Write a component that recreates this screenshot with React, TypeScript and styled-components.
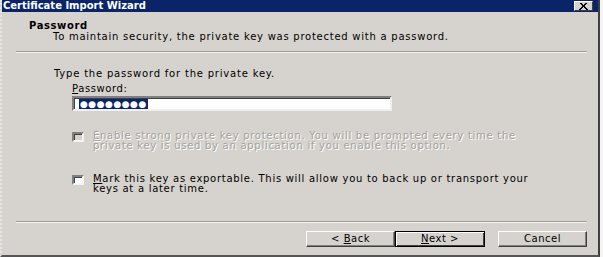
import React from "react";
import styled, { createGlobalStyle } from "styled-components";

const Global = createGlobalStyle`
  html, body { margin: 0; padding: 0; background: #f4f4f4; }
  body { width: 603px; height: 257px; overflow: hidden; }
  * { box-sizing: border-box; }
`;

const Window = styled.div`
  width: 600px;
  height: 257px;
  display: flex;
  flex-direction: column;
  background: #d6d3ce;
  border-left: 2px dotted #e6e6e6;
  border-right: 2px solid #404040;
  border-bottom: 2px solid #555555;
  font-family: "DejaVu Sans", Verdana, sans-serif;
  font-size: 10px;
  color: #000;
`;

const TitleBar = styled.div`
  height: 12px;
  background: #0a246a;
  display: flex;
  align-items: center;
  justify-content: space-between;
  padding: 0 5px 0 1px;
`;

const TitleText = styled.span`
  color: #fff;
  font-weight: bold;
  font-size: 10px;
  line-height: 12px;
`;

const CloseBtn = styled.div`
  width: 19px;
  height: 10px;
  background: #d6d3ce;
  border: 1px solid;
  border-color: #fff #404040 #404040 #fff;
  display: flex;
  align-items: center;
  justify-content: center;
`;

const Header = styled.div`
  height: 39px;
  padding: 9px 0 0 27px;
  display: flex;
  flex-direction: column;
  gap: 1px;
`;

const HeaderTitle = styled.div`
  font-weight: bold;
  line-height: 10px;
  font-size: 10px;
  letter-spacing: 0.6px;
`;

const HeaderSub = styled.div`
  line-height: 10px;
  padding-left: 24px;
  letter-spacing: 0.75px;
`;

const Separator = styled.div`
  margin-left: 14px;
  width: 571px;
  height: 2px;
  border-top: 1px solid #a09d98;
  border-bottom: 1px solid #f4f3f1;
`;

const Content = styled.div`
  flex: 1;
  padding: 16px 0 0 52px;
  display: flex;
  flex-direction: column;
`;

const Line = styled.div<{ $spacing?: number }>`
  line-height: 10px;
  letter-spacing: ${(p) => p.$spacing ?? 0}px;
`;

const Field = styled.div`
  margin: 5px 0 0 18px;
  display: flex;
  flex-direction: column;
`;

const Input = styled.div`
  margin-top: 2px;
  width: 320px;
  height: 15px;
  background: #fff;
  border: 2px solid;
  border-color: #808080 #f0f0f0 #f0f0f0 #808080;
  box-shadow: inset 1px 1px 0 #404040;
  display: flex;
  align-items: center;
  padding-left: 5px;
`;

const Selected = styled.span`
  background: #0a246a;
  color: #fff;
  font-size: 9px;
  line-height: 10px;
  letter-spacing: 0.5px;
  padding: 0 1px;
`;

const CheckRow = styled.div<{ $top: number }>`
  margin: ${(p) => p.$top}px 0 0 18px;
  display: flex;
  gap: 9px;
  align-items: flex-start;
`;

const Box = styled.div<{ $disabled?: boolean }>`
  flex: none;
  width: 12px;
  height: 10px;
  margin-top: 1px;
  background: ${(p) => (p.$disabled ? "#d6d3ce" : "#fff")};
  border: 2px solid;
  border-color: #808080 #f4f4f4 #f4f4f4 #808080;
  box-shadow: inset 1px 1px 0 #404040;
`;

const CheckText = styled.div<{ $disabled?: boolean }>`
  line-height: 9.5px;
  letter-spacing: 0.72px;
  color: ${(p) => (p.$disabled ? "#a5a29d" : "#000")};
  text-shadow: ${(p) => (p.$disabled ? "1px 1px 0 #fff" : "none")};
`;

const Footer = styled.div`
  height: 32px;
  display: flex;
  justify-content: flex-end;
  padding: 8px 11px 0 0;
`;

const Button = styled.div<{ $default?: boolean; $gap?: number }>`
  width: ${(p) => (p.$default ? 90 : 89)}px;
  height: 16px;
  margin-left: ${(p) => p.$gap ?? 0}px;
  display: flex;
  align-items: center;
  justify-content: center;
  line-height: 10px;
  letter-spacing: 0.5px;
  white-space: pre;
  background: #d6d3ce;
  border: 1px solid;
  border-color: ${(p) => (p.$default ? "#000" : "#fff #404040 #404040 #fff")};
  box-shadow: ${(p) =>
    p.$default
      ? "inset 1px 1px 0 #fff, inset -1px -1px 0 #404040"
      : "inset -1px -1px 0 #808080"};
`;

const U = styled.span`
  text-decoration: underline;
`;

export default function App() {
  return (
    <>
      <Global />
      <Window>
        <TitleBar>
          <TitleText>Certificate Import Wizard</TitleText>
          <CloseBtn>
            <svg width="9" height="7" viewBox="0 0 9 7">
              <path d="M1 0 L8 7 M8 0 L1 7 M2 0 L9 7 M7 0 L0 7" stroke="#000" strokeWidth="1" />
            </svg>
          </CloseBtn>
        </TitleBar>
        <Header>
          <HeaderTitle>Password</HeaderTitle>
          <HeaderSub>To maintain security, the private key was protected with a password.</HeaderSub>
        </Header>
        <Separator />
        <Content>
          <Line $spacing={0.8}>Type the password for the private key.</Line>
          <Field>
            <Line $spacing={0.6}>
              <U>P</U>assword:
            </Line>
            <Input>
              <Selected>●●●●●●●●</Selected>
            </Input>
          </Field>
          <CheckRow $top={20}>
            <Box $disabled />
            <CheckText $disabled>
              <U>E</U>nable strong private key protection. You will be prompted every time the
              <br />
              private key is used by an application if you enable this option.
            </CheckText>
          </CheckRow>
          <CheckRow $top={24}>
            <Box />
            <CheckText>
              <U>M</U>ark this key as exportable. This will allow you to back up or transport your
              <br />
              keys at a later time.
            </CheckText>
          </CheckRow>
        </Content>
        <Separator />
        <Footer>
          <Button>
            {"< "}
            <U>B</U>ack
          </Button>
          <Button $default>
            <U>N</U>
            {"ext >"}
          </Button>
          <Button $gap={13}>Cancel</Button>
        </Footer>
      </Window>
    </>
  );
}
